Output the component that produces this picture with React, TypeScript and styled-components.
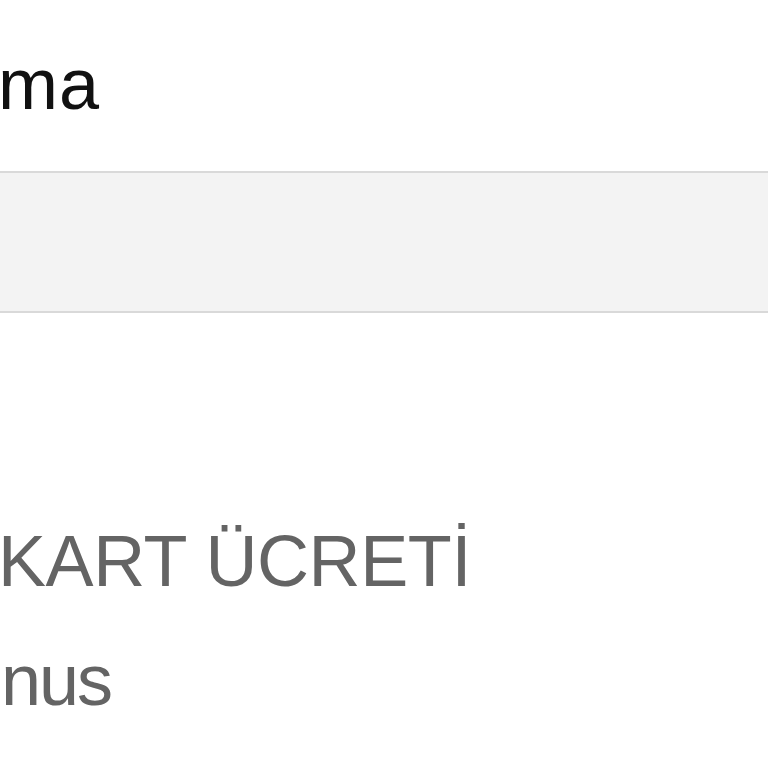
import React from 'react';
import styled, { createGlobalStyle } from 'styled-components';

const GlobalStyle = createGlobalStyle`
  html, body {
    margin: 0;
    padding: 0;
    background: #fff;
    overflow: hidden;
  }

  body {
    font-family: "Liberation Sans", Arial, sans-serif;
  }
`;

const Page = styled.div`
  width: 768px;
  height: 768px;
  overflow: hidden;
  padding-top: 48px;
  box-sizing: border-box;
`;

const Title = styled.h1`
  margin: 0 0 0 -2px;
  font-size: 72px;
  line-height: 72px;
  font-weight: 400;
  letter-spacing: 1px;
  color: #111;
  white-space: nowrap;
`;

const SearchBar = styled.div`
  margin-top: 51px;
  height: 138px;
  background: #f3f3f3;
  border-top: 2px solid #d9d9d9;
  border-bottom: 2px solid #d9d9d9;
`;

const Section = styled.div`
  margin-top: 212px;
  display: flex;
  flex-direction: column;
  gap: 47px;
`;

const Label = styled.div<{ $offset?: number; $spacing?: number }>`
  margin-left: ${(p) => p.$offset ?? -2}px;
  font-size: 72px;
  line-height: 72px;
  letter-spacing: ${(p) => p.$spacing ?? 0}px;
  color: #646464;
  white-space: nowrap;
`;

export default function App() {
  return (
    <>
      <GlobalStyle />
      <Page>
        <Title>ma</Title>
        <SearchBar />
        <Section>
          <Label $spacing={-0.4}>KART ÜCRETİ</Label>
          <Label $offset={1} $spacing={-2}>nus</Label>
        </Section>
      </Page>
    </>
  );
}
